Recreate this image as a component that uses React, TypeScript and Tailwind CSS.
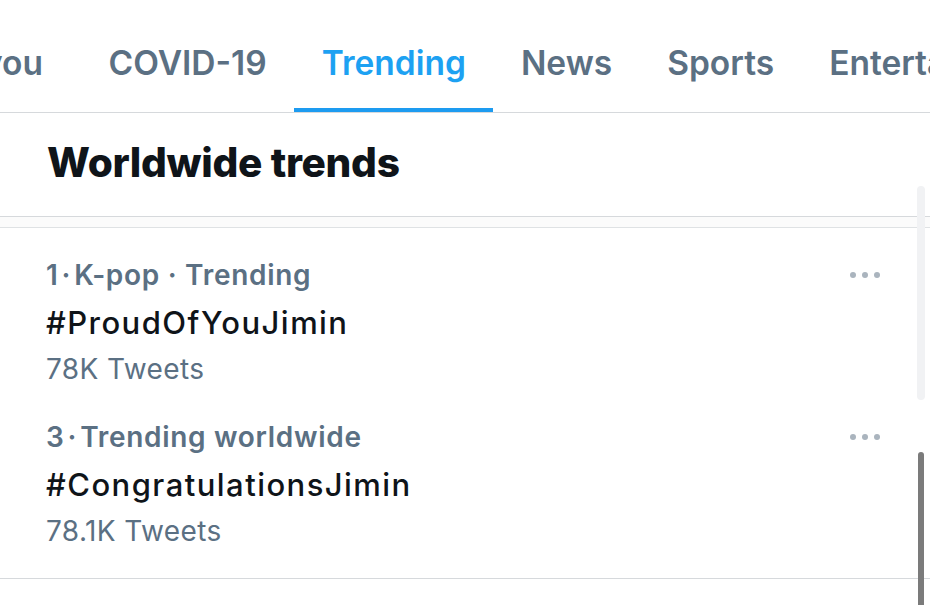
const TABS = ["COVID-19", "Trending", "News", "Sports", "Entertainment"];

const TRENDS = [
  { rank: "1", meta: "K-pop · Trending", name: "#ProudOfYouJimin", count: "78K Tweets" },
  { rank: "3", meta: "Trending worldwide", name: "#CongratulationsJimin", count: "78.1K Tweets" },
];

function Tab({ label, active }: { label: string; active?: boolean }) {
  return (
    <div className="flex flex-col items-stretch shrink-0 px-[27.5px] pt-[43px]">
      <span
        className={
          "leading-[40px] whitespace-nowrap " +
          (active ? "text-[#1da1f2]" : "text-[#5b7083]")
        }
      >
        {label}
      </span>
      <div
        className={
          "mt-[25px] h-[4px] -mx-[27.5px] " + (active ? "bg-[#1d9bf0]" : "bg-transparent")
        }
      />
    </div>
  );
}

function Dots() {
  return (
    <div className="flex gap-[6px] pt-[15px]">
      <span className="w-[6px] h-[6px] rounded-full bg-[#aab4be]" />
      <span className="w-[6px] h-[6px] rounded-full bg-[#aab4be]" />
      <span className="w-[6px] h-[6px] rounded-full bg-[#aab4be]" />
    </div>
  );
}

export default function App() {
  return (
    <div
      className="relative w-[930px] h-[605px] overflow-hidden bg-white"
      style={{ fontFamily: "Inter, 'Liberation Sans', sans-serif" }}
    >
      {/* Tabs */}
      <nav className="flex border-b border-[#d6d9dc] text-[33.5px] font-semibold h-[113px]">
        <div className="w-[81px] shrink-0 flex justify-end overflow-hidden pr-[38px] pt-[43px]">
          <span className="leading-[40px] whitespace-nowrap text-[#5b7083]">For you</span>
        </div>
        {TABS.map((t) => (
          <Tab key={t} label={t} active={t === "Trending"} />
        ))}
      </nav>

      {/* Heading */}
      <section className="pl-[47px] pt-[26px] pb-[29px] border-b border-[#d6d9dc]">
        <h1 className="text-[40.6px] leading-[48px] font-extrabold text-[#0f1419] tracking-[-0.3px]">
          Worldwide trends
        </h1>
      </section>
      <div className="h-[11px] bg-[#fbfbfb] border-b border-[#dfe2e4]" />

      {/* Trends */}
      <section className="pb-[26px] border-b border-[#d6d9dc]">
        {TRENDS.map((t) => (
          <div key={t.name} className="flex pl-[46px] pr-[50px] pt-[29px] pb-[3px]">
            <div className="flex-1">
              <div className="text-[28px] leading-[36px] font-semibold text-[#5b7083] tracking-[0.7px]">
                {t.rank}
                <span className="mx-[3px]">·</span>
                {t.meta}
              </div>
              <div className="mt-[10px] text-[31px] leading-[40px] font-medium text-[#0f1419] tracking-[1.45px]">
                {t.name}
              </div>
              <div className="mt-[8px] text-[28px] leading-[36px] text-[#5b7083] tracking-[0.4px]">
                {t.count}
              </div>
            </div>
            <Dots />
          </div>
        ))}
      </section>

      {/* scrollbars */}
      <div className="absolute left-[917px] top-[186px] w-[8px] h-[214px] rounded-full bg-[#f1f2f4]" />
      <div className="absolute left-[918px] top-[452px] w-[6px] h-[170px] rounded-full bg-[#7b7b7b]" />
    </div>
  );
}
